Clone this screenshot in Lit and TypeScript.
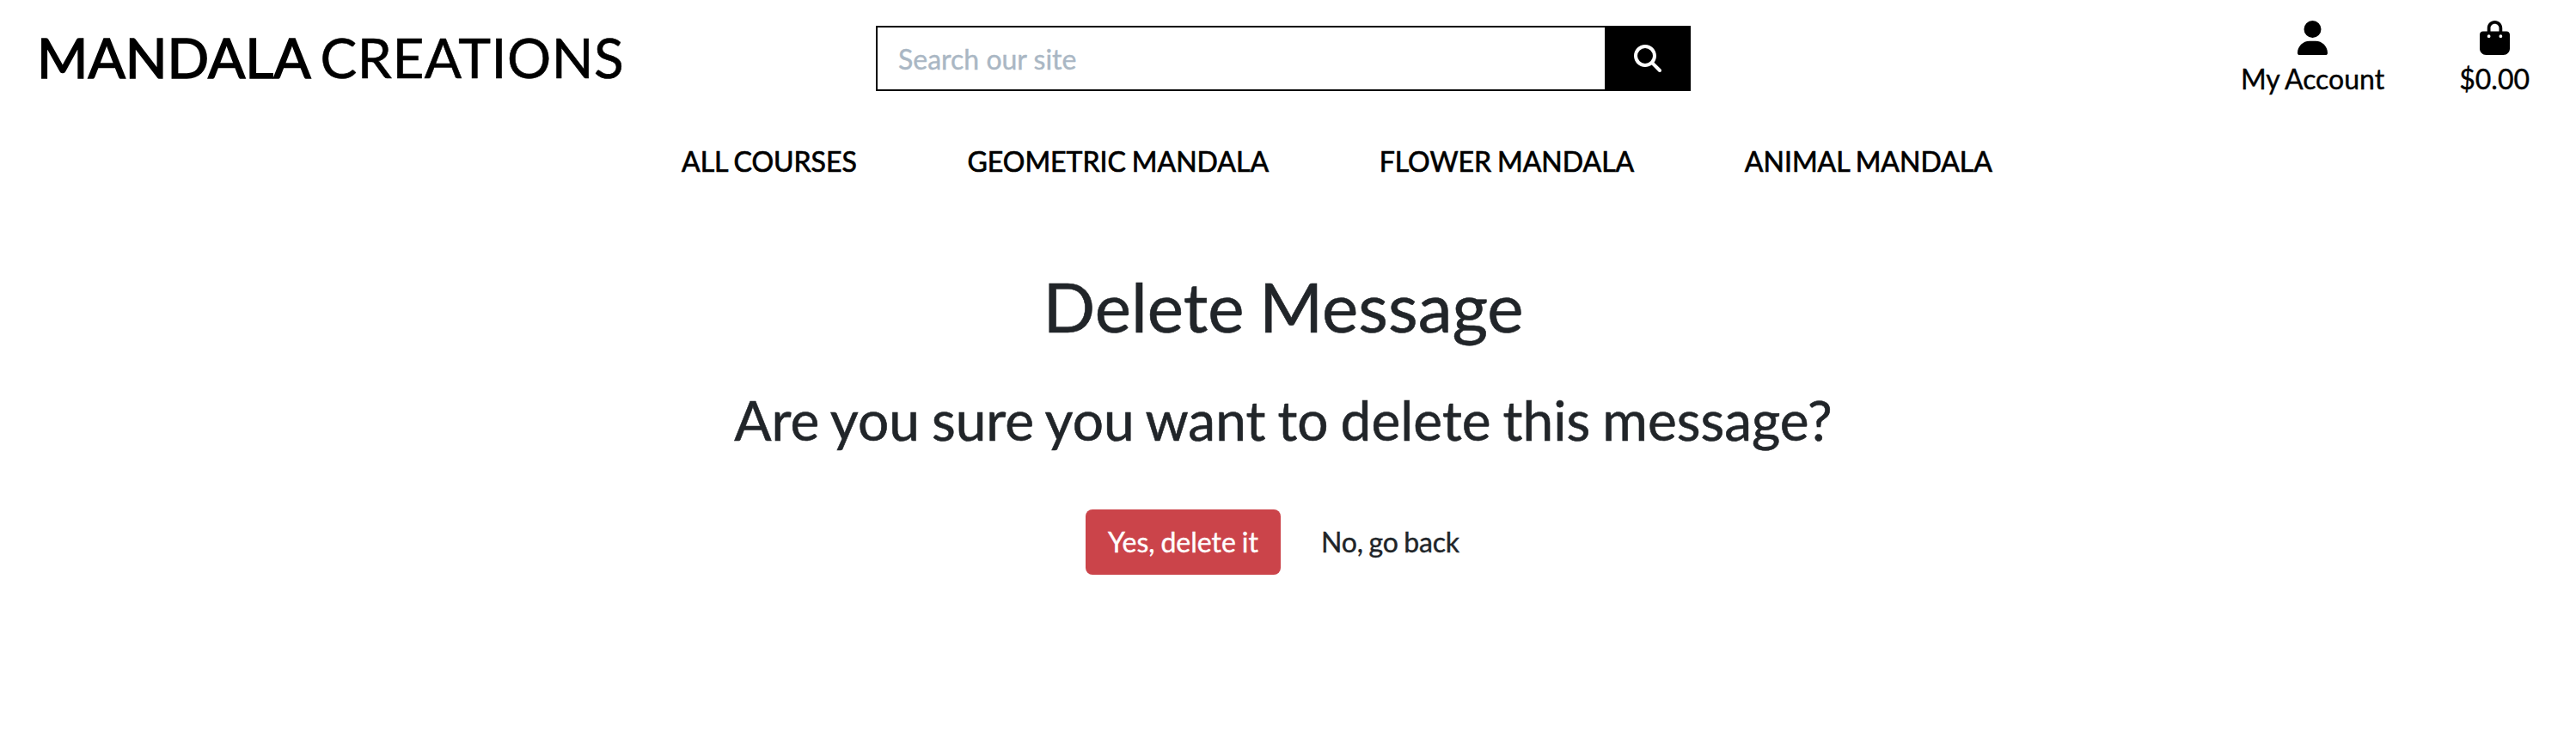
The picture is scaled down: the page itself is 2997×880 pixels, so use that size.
import { LitElement, html, css } from "lit";
import { customElement } from "lit/decorators.js";

@customElement("app-root")
export class AppRoot extends LitElement {
  static styles = css`
    :host { display: block; height: 880px; overflow: hidden; background: #fff; color: #212529; font-family: Lato, sans-serif; font-size: 32px; line-height: 48px; word-spacing: -0.04em; -webkit-text-stroke: 0.4px currentColor; }
    * { box-sizing: border-box; }
    header { display: flex; height: 138px; color: #000; }
    .logo { display: flex; gap: 11px; width: 1019px; padding: 27px 0 0 43px; font-size: 64px; line-height: 80px; white-space: nowrap; -webkit-text-stroke-width: 0.6px; }
    .logo b { font-weight: 400; -webkit-text-stroke: 1.6px currentColor; }
    .logo span { letter-spacing: 0.5px; }
    .search { display: flex; width: 948px; height: 76px; margin-top: 30px; border: 2px solid #000; }
    .search input { flex: 1; min-width: 0; border: 0; padding: 1px 24px 0; font: inherit; word-spacing: 0; outline: 0; }
    .search input::placeholder { color: #aab7c4; opacity: 1; }
    .search button { width: 98px; border: 0; background: #000; padding: 0 0 0 2px; display: flex; align-items: center; justify-content: center; }
    .account { margin: 24px 54px 0 auto; display: flex; gap: 87px; }
    .item { display: flex; flex-direction: column; align-items: center; gap: 4px; white-space: nowrap; }
    svg { display: block; }
    nav { display: flex; gap: 128.6px; padding: 26px 0 0 793px; height: 112px; color: #000; -webkit-text-stroke-width: 0.7px; }
    nav a { white-space: nowrap; }
    main { text-align: center; padding-right: 11px; }
    h2, h3 { font-weight: 400; margin: 0; word-spacing: -0.036em; -webkit-text-stroke-width: 0.6px; }
    h2 { font-size: 80px; line-height: 96px; padding-top: 58px; }
    h3 { font-size: 64px; line-height: 76px; padding-top: 47px; }
    .actions { display: flex; justify-content: center; gap: 22px; padding-top: 66px; }
    .btn { height: 76px; width: 211px; line-height: 76px; border-radius: 8px; letter-spacing: -0.2px; }
    .danger { width: 227px; background: #cb444a; color: #fff; letter-spacing: 0; }
  `;
  render() {
    return html`
      <header>
        <div class="logo"><b>MANDALA</b><span>CREATIONS</span></div>
        <form class="search"><input placeholder="Search our site" /><button type="button" aria-label="Search"><svg width="32" height="32" viewBox="0 0 512 512" fill="#fff"><path d="M416 208c0 45.900-14.900 88.300-40 122.700L502.600 457.400c12.500 12.500 12.500 32.800 0 45.300s-32.800 12.500-45.300 0L330.700 376c-34.400 25.200-76.800 40-122.700 40C93.100 416 0 322.900 0 208S93.100 0 208 0S416 93.100 416 208zM208 352a144 144 0 1 0 0-288 144 144 0 1 0 0 288z"/></svg></button></form>
        <div class="account">
          <div class="item"><svg width="35" height="40" viewBox="0 0 448 512"><path d="M224 256A128 128 0 1 0 224 0a128 128 0 1 0 0 256zm-45.700 48C79.800 304 0 383.800 0 482.300C0 498.700 13.300 512 29.700 512H418.300c16.400 0 29.700-13.300 29.700-29.700C448 383.800 368.200 304 269.700 304H178.300z"/></svg><span>My Account</span></div>
          <div class="item"><svg width="35" height="40" viewBox="0 0 448 512"><path d="M160 112c0-35.300 28.700-64 64-64s64 28.700 64 64v48H160V112zm-48 48H48c-26.500 0-48 21.500-48 48V416c0 53 43 96 96 96H352c53 0 96-43 96-96V208c0-26.500-21.500-48-48-48H336V112C336 50.100 285.900 0 224 0S112 50.100 112 112v48zm24 48a24 24 0 1 1 0 48 24 24 0 1 1 0-48zm152 24a24 24 0 1 1 48 0 24 24 0 1 1 -48 0z"/></svg><span>$0.00</span></div>
        </div>
      </header>
      <nav><a>ALL COURSES</a><a>GEOMETRIC MANDALA</a><a>FLOWER MANDALA</a><a>ANIMAL MANDALA</a></nav>
      <main>
        <h2>Delete Message</h2>
        <h3>Are you sure you want to delete this message?</h3>
        <div class="actions"><a class="btn danger">Yes, delete it</a><a class="btn">No, go back</a></div>
      </main>
    `;
  }
}
